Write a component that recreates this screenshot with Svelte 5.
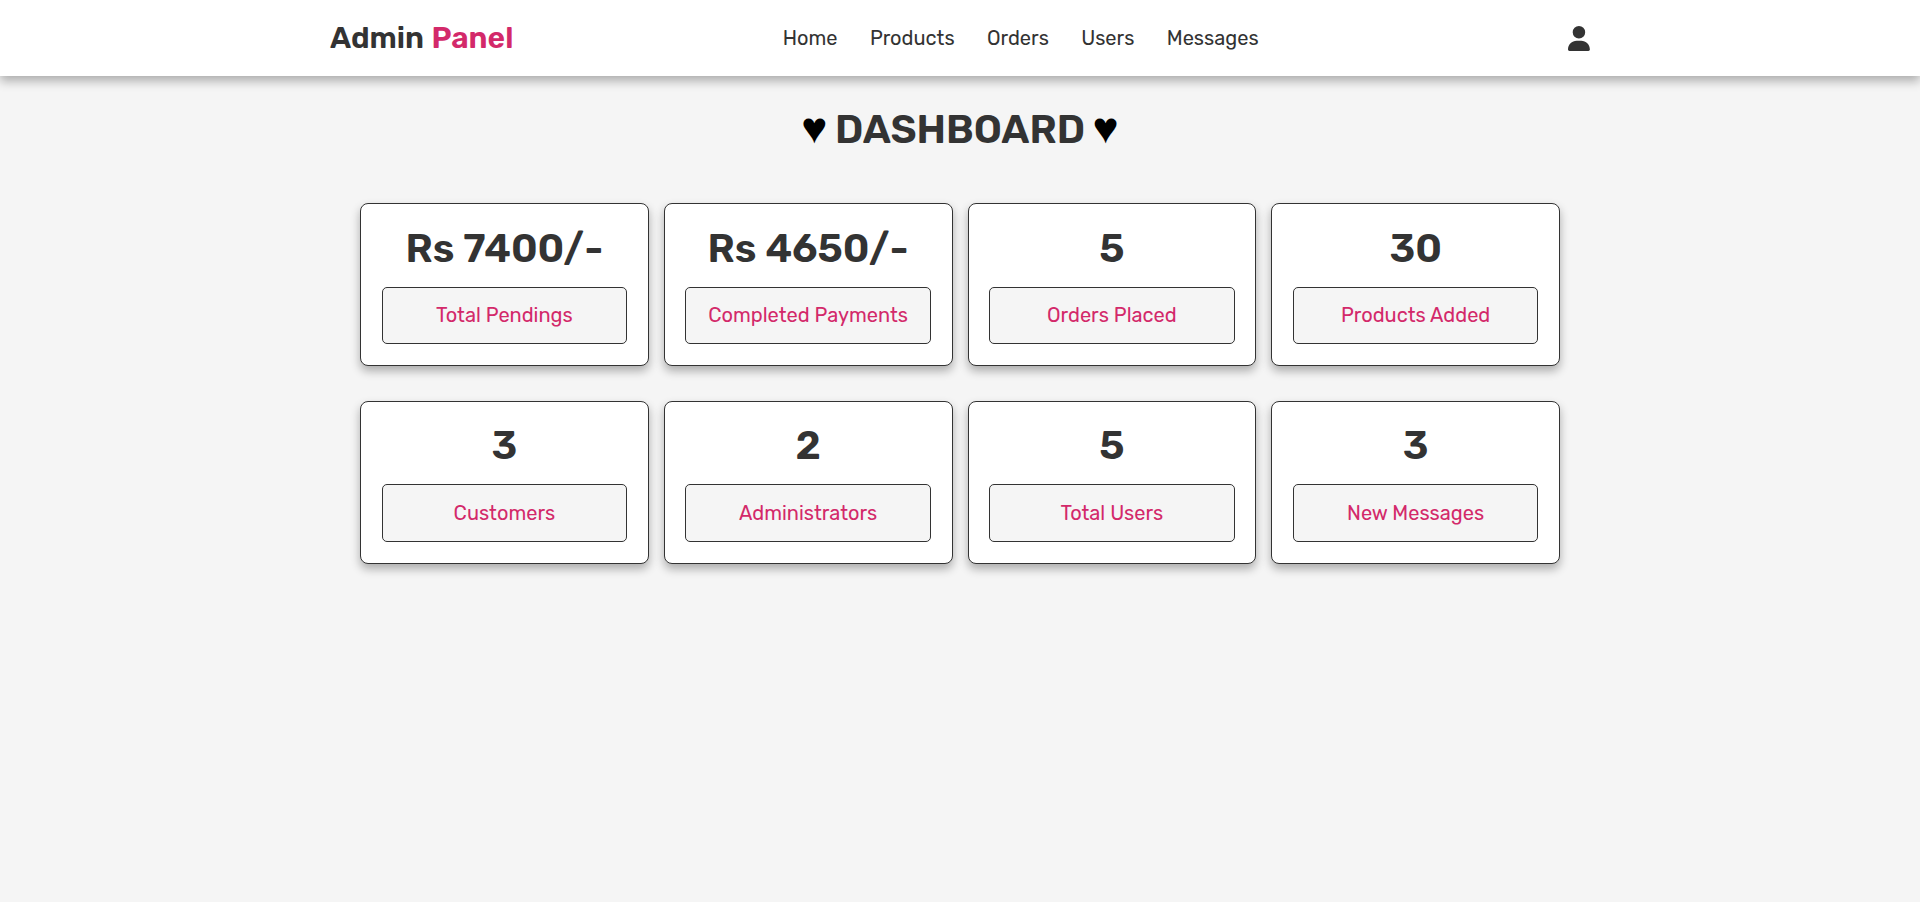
<script>
  const links = ['Home', 'Products', 'Orders', 'Users', 'Messages'];
  const stats = [
    { value: 'Rs 7400/-', label: 'Total Pendings' },
    { value: 'Rs 4650/-', label: 'Completed Payments' },
    { value: '5', label: 'Orders Placed' },
    { value: '30', label: 'Products Added' },
    { value: '3', label: 'Customers' },
    { value: '2', label: 'Administrators' },
    { value: '5', label: 'Total Users' },
    { value: '3', label: 'New Messages' }
  ];
</script>

<header class="header">
  <div class="bar">
    <a class="logo" href="#home">Admin <span>Panel</span></a>
    <nav class="navbar">
      {#each links as link}
        <a href="#{link}">{link}</a>
      {/each}
    </nav>
    <div class="icons">
      <svg viewBox="0 0 448 512" aria-hidden="true">
        <path d="M224 256A128 128 0 1 0 224 0a128 128 0 1 0 0 256zm-45.7 48C79.8 304 0 383.8 0 482.3C0 498.7 13.3 512 29.7 512l388.6 0c16.4 0 29.7-13.3 29.7-29.7C448 383.8 368.2 304 269.7 304l-91.4 0z" />
      </svg>
    </div>
  </div>
</header>

<section class="dashboard">
  <h1 class="title"><span class="heart">♥</span><span>Dashboard</span><span class="heart">♥</span></h1>
  <div class="grid">
    {#each stats as stat}
      <div class="box">
        <h3>{stat.value}</h3>
        <p>{stat.label}</p>
      </div>
    {/each}
  </div>
</section>

<style>
  :global(body) {
    margin: 0;
    background: #f5f5f5;
    font-family: Rubik, Inter, Roboto, sans-serif;
    color: #333;
  }

  a {
    color: inherit;
    text-decoration: none;
  }

  .header {
    position: sticky;
    top: 0;
    background: #fff;
    box-shadow: 0 5px 10px rgba(0, 0, 0, 0.3);
  }

  .bar {
    box-sizing: border-box;
    max-width: 1300px;
    height: 76px;
    margin: 0 auto;
    padding: 0 20px;
    display: flex;
    align-items: center;
    justify-content: space-between;
  }

  .logo {
    font-size: 30px;
    font-weight: 600;
    word-spacing: 0.8px;
  }

  .logo span {
    color: #d3296a;
  }

  .navbar {
    display: flex;
    gap: 32.4px;
    padding: 0 15px;
    font-size: 20px;
    font-weight: 400;
  }

  .icons {
    width: 62px;
    display: flex;
    justify-content: flex-end;
  }

  .icons svg {
    height: 25px;
    fill: #333;
  }

  .dashboard {
    box-sizing: border-box;
    width: 1200px;
    min-height: calc(100vh - 76px);
    margin: 0 auto;
    padding-top: 30px;
  }

  .title {
    margin: 0 0 50.2px;
    height: 47px;
    display: flex;
    justify-content: center;
    gap: 7.5px;
    font-size: 40px;
    line-height: 47px;
    font-weight: 600;
    text-transform: uppercase;
  }

  .heart {
    color: #000;
    font-family: "Liberation Serif", serif;
    font-size: 44px;
    line-height: 45px;
    font-weight: 400;
  }

  .grid {
    display: grid;
    grid-template-columns: repeat(4, 1fr);
    column-gap: 15px;
    row-gap: 34.6px;
  }

  .box {
    padding: 20.7px 20.6px 21px;
    border: 1px solid #333;
    border-radius: 8px;
    background: #fff;
    box-shadow: 0 5px 10px rgba(0, 0, 0, 0.3);
    text-align: center;
  }

  .box h3 {
    margin: 0 0 14.9px;
    font-size: 40px;
    line-height: 47px;
    font-weight: 600;
  }

  .box p {
    margin: 0;
    padding: 15.65px 0;
    border: 1px solid #333;
    border-radius: 5px;
    background: #f5f5f5;
    color: #d3296a;
    font-size: 20px;
    font-weight: 400;
    line-height: 24px;
  }
</style>
